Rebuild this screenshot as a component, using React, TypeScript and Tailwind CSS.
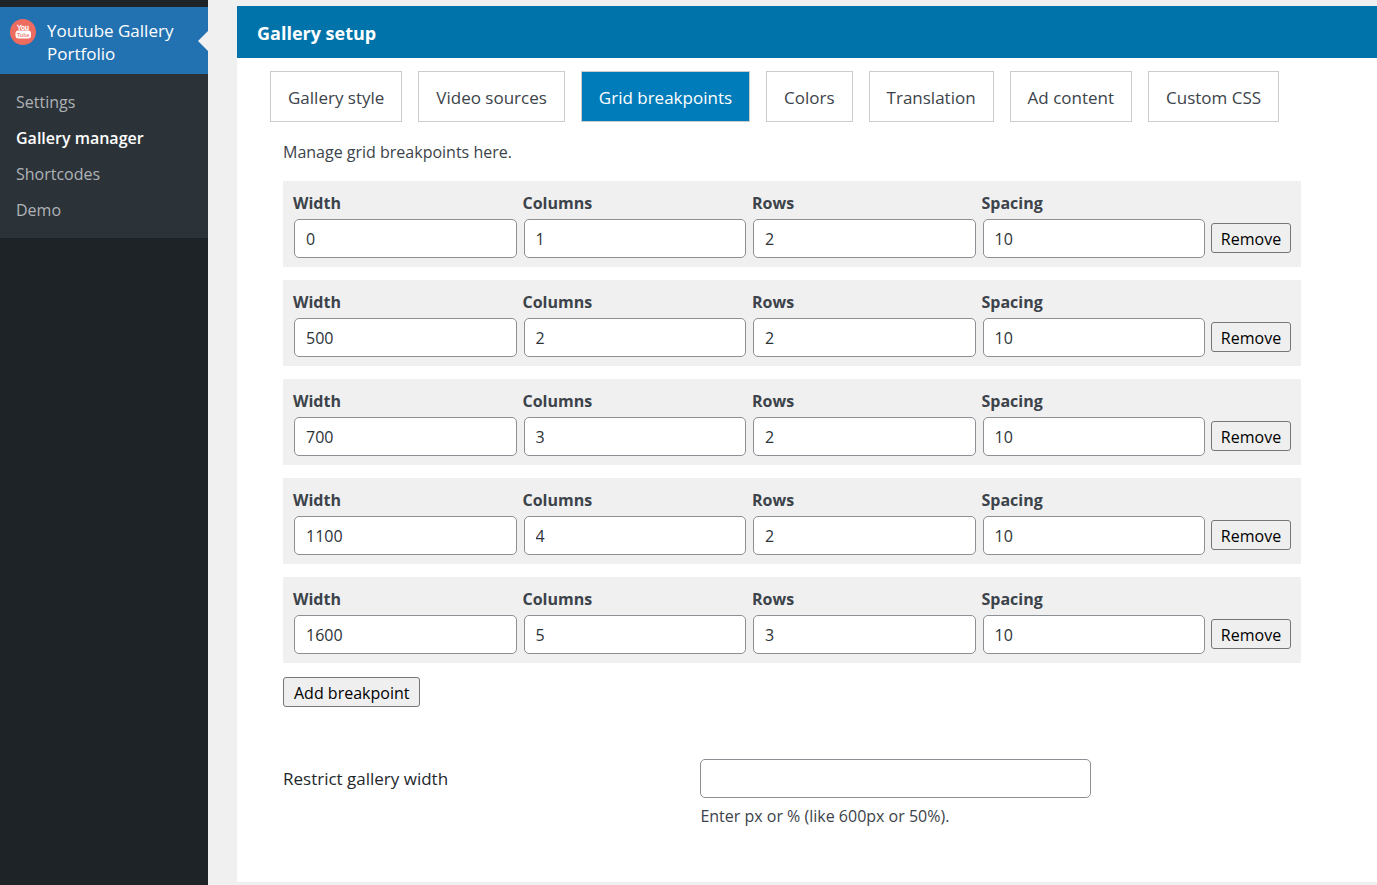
import { useState } from "react";

type Breakpoint = {
  id: number;
  width: string;
  columns: string;
  rows: string;
  spacing: string;
};

type Field = "width" | "columns" | "rows" | "spacing";

const menuItems = ["Settings", "Gallery manager", "Shortcodes", "Demo"];

const tabs = [
  "Gallery style",
  "Video sources",
  "Grid breakpoints",
  "Colors",
  "Translation",
  "Ad content",
  "Custom CSS",
];

const fields: { key: Field; label: string }[] = [
  { key: "width", label: "Width" },
  { key: "columns", label: "Columns" },
  { key: "rows", label: "Rows" },
  { key: "spacing", label: "Spacing" },
];

const initialBreakpoints: Breakpoint[] = [
  { id: 1, width: "0", columns: "1", rows: "2", spacing: "10" },
  { id: 2, width: "500", columns: "2", rows: "2", spacing: "10" },
  { id: 3, width: "700", columns: "3", rows: "2", spacing: "10" },
  { id: 4, width: "1100", columns: "4", rows: "2", spacing: "10" },
  { id: 5, width: "1600", columns: "5", rows: "3", spacing: "10" },
];

const inputClass =
  "block h-[39px] w-full rounded-[5px] border border-[#8c8f94] bg-white px-[11px] text-[16px] text-[#2c3338] outline-none focus:border-[#2271b1]";

const buttonClass =
  "h-[30px] shrink-0 rounded-[3px] border border-[#767676] bg-[#efefef] pt-0.5 text-[16px] leading-5 text-black hover:bg-[#e5e5e5]";

function PluginIcon() {
  return (
    <svg viewBox="0 0 26 26" className="size-[26px] shrink-0" aria-hidden="true">
      <circle cx="13" cy="13" r="13" fill="#ed6b5f" />
      <text x="13" y="10.5" textAnchor="middle" fontSize="7" fontFamily="Liberation Sans, sans-serif" fill="#fff" stroke="#fff" strokeWidth="0.3">
        You
      </text>
      <rect x="5.5" y="11.5" width="15.5" height="8" rx="3" fill="#fff" />
      <text x="13.2" y="17.6" textAnchor="middle" fontSize="5.5" fontWeight="bold" fontFamily="Liberation Sans, sans-serif" fill="#f08a80">
        Tube
      </text>
    </svg>
  );
}

function Sidebar() {
  return (
    <aside className="w-52 shrink-0 bg-[#1d2327] pt-[7px]">
      <a href="#plugin" className="relative flex gap-[11px] bg-[#2271b1] px-[10px] pt-3 pb-[9px] text-[17px] leading-[23px] text-white">
        <PluginIcon />
        <span>Youtube Gallery Portfolio</span>
        <span className="absolute top-1/2 right-0 -translate-y-1/2 border-y-[10px] border-r-[10px] border-y-transparent border-r-[#f0f0f1]" />
      </a>
      <nav className="bg-[#2c3338] py-[10px]">
        {menuItems.map((item) => (
          <a
            key={item}
            href="#menu"
            className={
              item === "Gallery manager"
                ? "block px-4 text-[16px] leading-9 font-semibold text-white"
                : "block px-4 text-[16px] leading-9 text-[#afb2b7] hover:text-[#72aee6]"
            }
          >
            {item}
          </a>
        ))}
      </nav>
    </aside>
  );
}

export default function App() {
  const [activeTab, setActiveTab] = useState("Grid breakpoints");
  const [breakpoints, setBreakpoints] = useState(initialBreakpoints);
  const [maxWidth, setMaxWidth] = useState("");

  const update = (id: number, key: Field, value: string) => {
    setBreakpoints((prev) => prev.map((b) => (b.id === id ? { ...b, [key]: value } : b)));
  };

  const remove = (id: number) => {
    setBreakpoints((prev) => prev.filter((b) => b.id !== id));
  };

  const add = () => {
    setBreakpoints((prev) => [
      ...prev,
      { id: Date.now(), width: "", columns: "", rows: "", spacing: "10" },
    ]);
  };

  return (
    <div className="flex min-h-screen bg-[#f0f0f1] font-['Open_Sans','Noto_Sans',sans-serif] text-[16px] text-[#3c434a]">
      <Sidebar />

      <main className="min-w-0 flex-1 pt-[6px] pb-[3px] pl-[29px]">
        <div className="min-h-full bg-white">
          <h1 className="bg-[#0073aa] px-5 pt-0.5 text-[18px] leading-[50px] font-bold text-white">
            Gallery setup
          </h1>

          {/* Tabs */}
          <div className="flex flex-wrap gap-4 px-[33px] pt-[13px]">
            {tabs.map((tab) => (
              <button
                key={tab}
                type="button"
                onClick={() => setActiveTab(tab)}
                className={
                  tab === activeTab
                    ? "h-[51px] border border-[#ccc] bg-[#007cba] px-[17px] pt-0.5 text-[17px] text-white"
                    : "h-[51px] border border-[#ccc] bg-white px-[17px] pt-0.5 text-[17px] text-[#3c434a]"
                }
              >
                {tab}
              </button>
            ))}
          </div>

          <section className="pt-[18px] pr-[76px] pb-[53px] pl-[46px]">
            <p className="leading-6">Manage grid breakpoints here.</p>

            {/* Breakpoint rows */}
            <div className="mt-[17px] flex flex-col gap-[13px]">
              {breakpoints.map((bp) => (
                <div key={bp.id} className="flex items-end bg-[#f0f0f0] px-[10px] pt-3 pb-[9px]">
                  {fields.map(({ key, label }) => (
                    <div key={key} className="min-w-0 flex-1">
                      <label htmlFor={`${key}-${bp.id}`} className="mb-[6px] block leading-5 font-bold">
                        {label}
                      </label>
                      <div className="pr-[6px] pl-px">
                        <input
                          id={`${key}-${bp.id}`}
                          type="text"
                          value={bp[key]}
                          onChange={(e) => update(bp.id, key, e.target.value)}
                          className={inputClass}
                        />
                      </div>
                    </div>
                  ))}
                  <div className="pb-[5px]">
                    <button type="button" onClick={() => remove(bp.id)} className={`${buttonClass} block w-20`}>
                      Remove
                    </button>
                  </div>
                </div>
              ))}
            </div>
            <button type="button" onClick={add} className={`${buttonClass} mt-[14px] px-[10px]`}>
              Add breakpoint
            </button>

            {/* Width limit */}
            <div className="mt-[52px] grid grid-cols-[41%_1fr]">
              <label htmlFor="max-width" className="text-[17px] leading-[39px] text-[#23282d]">
                Restrict gallery width
              </label>
              <div>
                <input
                  id="max-width"
                  type="text"
                  value={maxWidth}
                  onChange={(e) => setMaxWidth(e.target.value)}
                  className={`${inputClass} max-w-[391px]`}
                />
                <p className="mt-[6px] leading-6">Enter px or % (like 600px or 50%).</p>
              </div>
            </div>
          </section>
        </div>
      </main>
    </div>
  );
}
